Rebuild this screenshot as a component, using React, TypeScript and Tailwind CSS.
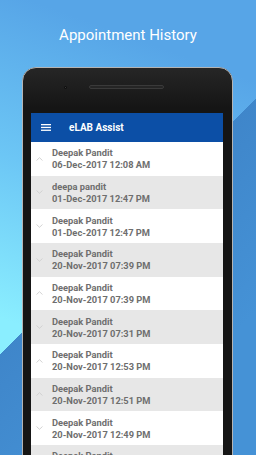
import React from "react";

const rows: { name: string; date: string; up: boolean }[] = [
  { name: "Deepak Pandit", date: "06-Dec-2017 12:08 AM", up: true },
  { name: "deepa pandit", date: "01-Dec-2017 12:47 PM", up: false },
  { name: "Deepak Pandit", date: "01-Dec-2017 12:47 PM", up: false },
  { name: "Deepak Pandit", date: "20-Nov-2017 07:39 PM", up: false },
  { name: "Deepak Pandit", date: "20-Nov-2017 07:39 PM", up: true },
  { name: "Deepak Pandit", date: "20-Nov-2017 07:31 PM", up: false },
  { name: "Deepak Pandit", date: "20-Nov-2017 12:53 PM", up: true },
  { name: "Deepak Pandit", date: "20-Nov-2017 12:51 PM", up: true },
  { name: "Deepak Pandit", date: "20-Nov-2017 12:49 PM", up: false },
  { name: "Deepak Pandit", date: "20-Nov-2017 12:47 PM", up: true },
];

function Chevron({ up }: { up: boolean }) {
  return (
    <svg width="7" height="4" viewBox="0 0 7 4" className="shrink-0">
      {up ? (
        <polyline points="0.5,3.5 3.5,0.7 6.5,3.5" fill="none" stroke="#cfcfcf" strokeWidth="0.9" />
      ) : (
        <polyline points="0.5,0.5 3.5,3.3 6.5,0.5" fill="none" stroke="#cfcfcf" strokeWidth="0.9" />
      )}
    </svg>
  );
}

export default function App() {
  return (
    <div
      className="w-[256px] h-[455px] overflow-hidden bg-[linear-gradient(135deg,transparent_49.8%,#3f86ca_49.8%,#4592d6_80%),linear-gradient(200deg,#57a5e7_15%,#6cc6f5_45%,#8aeeff_75%)]"
      style={{ fontFamily: "Roboto, 'Noto Sans', sans-serif" }}
    >
      <div className="pt-[25px] h-[67px] text-center text-white text-[15px] leading-[20px]">
        Appointment History
      </div>
      <div className="ml-[22px] w-[211px] h-[400px] rounded-t-[14px] border border-[#b4b4b4] bg-[#151515] bg-[linear-gradient(180deg,#262626_0px,#151515_40px)] flex flex-col">
        <div className="h-[45px] shrink-0 flex items-start pt-[17px] pl-[41px]">
          <div className="w-[3px] h-[3px] mt-[1px] rounded-full bg-[#3a3a3a] border border-[#0a0a0a]" />
          <div className="ml-[22px] w-[75px] h-[4px] rounded-full bg-[#252525] border border-[#3a3a3a]" />
        </div>
        <div className="ml-[8px] w-[192px] flex-1 bg-white flex flex-col">
          <div className="h-[29px] shrink-0 bg-[#0c4fa6] flex items-center">
            <svg width="10" height="7" viewBox="0 0 10 7" className="ml-[10px]">
              <rect x="0" y="0" width="10" height="1.3" fill="white" />
              <rect x="0" y="2.8" width="10" height="1.3" fill="white" />
              <rect x="0" y="5.6" width="10" height="1.3" fill="white" />
            </svg>
            <span className="ml-[18px] text-white font-bold text-[10px] leading-none">eLAB Assist</span>
          </div>
          {rows.map((r, i) => (
            <div
              key={i}
              className={`h-[33.67px] shrink-0 flex items-start ${i % 2 === 1 ? "bg-[#e7e7e7]" : "bg-white"}`}
            >
              <div className="w-[21px] h-full flex items-center pl-[5px]">
                <Chevron up={r.up} />
              </div>
              <div className="pt-[5.3px] text-[#6e6e6e] font-bold text-[9.3px] leading-[12px]">
                <div>{r.name}</div>
                <div>{r.date}</div>
              </div>
            </div>
          ))}
        </div>
      </div>
    </div>
  );
}
